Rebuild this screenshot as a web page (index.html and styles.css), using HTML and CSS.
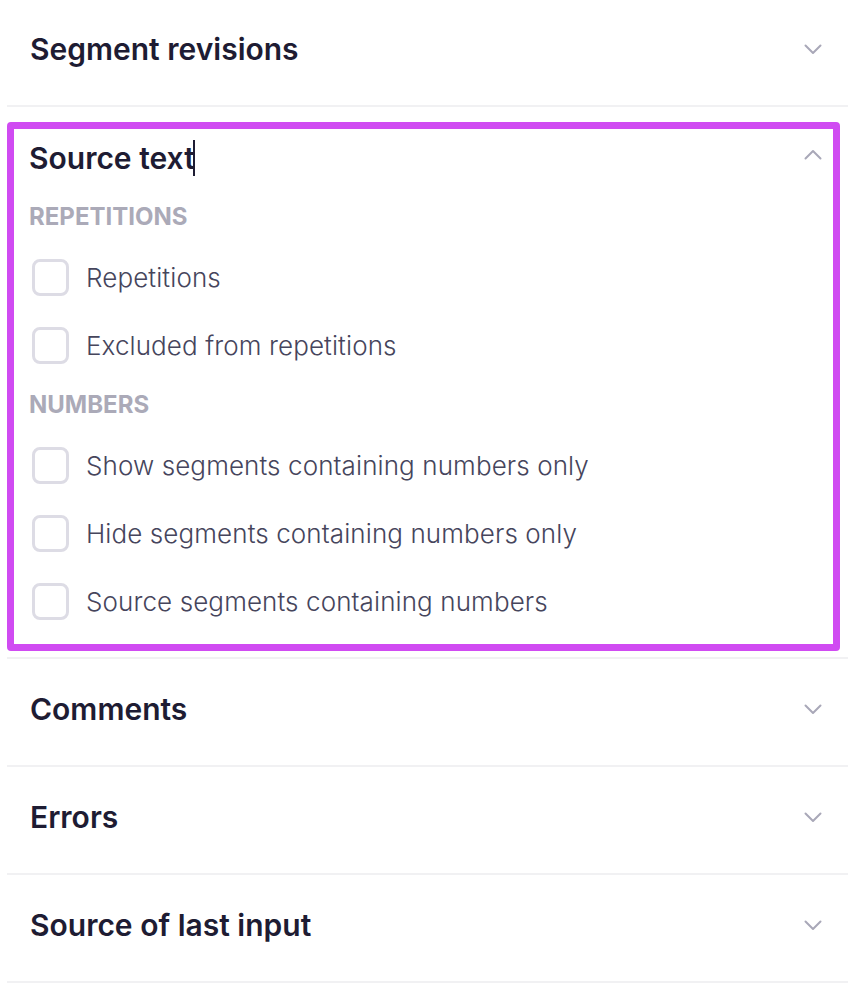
FILE: index.html
```html
<!DOCTYPE html>
<html lang="en">
<head>
    <meta charset="UTF-8">
    <meta name="viewport" content="width=device-width, initial-scale=1.0">
    <title>Filters</title>
    <link rel="stylesheet" href="styles.css">
</head>
<body>
    <div class="panel">
        <div class="section">
            <div class="section-header">
                <h2>Segment revisions</h2>
                <svg class="chevron" width="18" height="11" viewBox="0 0 18 11"><path d="M1.5 1.5 L9 9 L16.5 1.5"/></svg>
            </div>
        </div>

        <div class="section open">
            <div class="focus-box">
                <div class="section-header">
                    <h2>Source text<span class="caret"></span></h2>
                    <svg class="chevron" width="18" height="11" viewBox="0 0 18 11"><path d="M1.5 9.5 L9 2 L16.5 9.5"/></svg>
                </div>
                <div class="group-label">Repetitions</div>
                <label class="check-row"><span class="box"></span>Repetitions</label>
                <label class="check-row"><span class="box"></span>Excluded from repetitions</label>
                <div class="group-label">Numbers</div>
                <label class="check-row"><span class="box"></span>Show segments containing numbers only</label>
                <label class="check-row"><span class="box"></span>Hide segments containing numbers only</label>
                <label class="check-row"><span class="box"></span>Source segments containing numbers</label>
            </div>
        </div>

        <div class="section">
            <div class="section-header">
                <h2>Comments</h2>
                <svg class="chevron" width="18" height="11" viewBox="0 0 18 11"><path d="M1.5 1.5 L9 9 L16.5 1.5"/></svg>
            </div>
        </div>

        <div class="section">
            <div class="section-header">
                <h2>Errors</h2>
                <svg class="chevron" width="18" height="11" viewBox="0 0 18 11"><path d="M1.5 1.5 L9 9 L16.5 1.5"/></svg>
            </div>
        </div>

        <div class="section">
            <div class="section-header">
                <h2>Source of last input</h2>
                <svg class="chevron" width="18" height="11" viewBox="0 0 18 11"><path d="M1.5 1.5 L9 9 L16.5 1.5"/></svg>
            </div>
        </div>
    </div>
</body>
</html>
```

FILE: styles.css
```css
body {
    margin: 0;
    font-family: Inter, "Noto Sans", sans-serif;
    background: #ffffff;
    color: #1e1c33;
}

.panel {
    margin-top: -1px;
    padding-left: 7px;
}

.section {
    border-bottom: 2px solid #f1f1f3;
}

.section-header {
    height: 106px;
    box-sizing: border-box;
    display: flex;
    align-items: center;
    justify-content: space-between;
    padding: 0 26px 6px 23px;
}

.section-header h2 {
    margin: 0;
    font-size: 30px;
    font-weight: 600;
    line-height: 36px;
    display: flex;
    align-items: center;
}

.chevron {
    fill: none;
    stroke: #a9a8b8;
    stroke-width: 2;
    stroke-linecap: round;
    stroke-linejoin: round;
}

.section.open {
    padding: 15px 8px 6px 0;
}

.focus-box {
    border: 7px solid #d04bf2;
    border-radius: 4px;
    padding-bottom: 9px;
}

.focus-box .section-header {
    height: auto;
    padding: 11px 11px 0 15px;
    margin-bottom: 15px;
}

.focus-box .section-header .chevron {
    margin-top: -8px;
}

.caret {
    display: inline-block;
    width: 2px;
    height: 36px;
    background: #1e1c33;
    margin-left: -2px;
}

.group-label {
    padding: 14px 15px;
    font-size: 24px;
    line-height: 24px;
    font-weight: 700;
    text-transform: uppercase;
    color: #abaab8;
}

.check-row {
    height: 68px;
    display: flex;
    align-items: center;
    padding-left: 18px;
    font-size: 26px;
    font-weight: 300;
    letter-spacing: 0.1px;
    color: #46455c;
    cursor: pointer;
}

.check-row .box {
    width: 37px;
    height: 37px;
    box-sizing: border-box;
    border: 3px solid #dddce5;
    border-radius: 8px;
    margin-right: 17px;
    flex-shrink: 0;
}
```
